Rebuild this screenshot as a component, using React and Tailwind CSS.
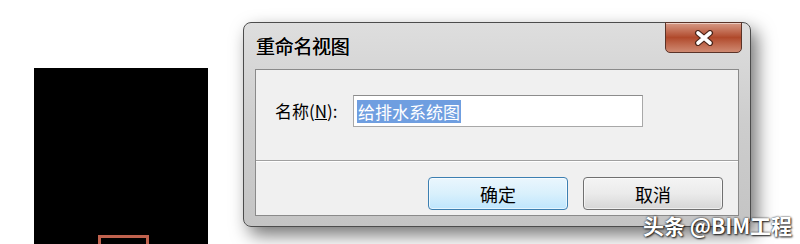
export default function App() {
  const cjk = { fontFamily: '"Noto Sans CJK SC", "Noto Sans", sans-serif' };
  return (
    <div className="relative w-[800px] h-[244px] overflow-hidden bg-white flex items-start" style={cjk}>
      {/* black canvas block */}
      <div className="ml-[34px] mt-[68px] w-[174px] h-[190px] bg-black shrink-0 flex flex-col pt-[167px] pl-[64px]">
        <div className="w-[51px] h-[20px] border-[3px] border-[#c0624e] bg-black" />
      </div>

      {/* dialog */}
      <div className="ml-[35px] mt-[22px] w-[508px] h-[205px] shrink-0 rounded-[8px] border border-[#4c4c4c] bg-gradient-to-b from-[#dedede] via-[#cdcdcd] to-[#c4c4c4] shadow-[6px_8px_18px_rgba(0,0,0,0.55)] flex flex-col px-[11px] pb-[10px]">
        {/* title bar */}
        <div className="h-[46px] flex items-start justify-between">
          <div className="pt-[10px] pl-[1px] text-[19px] leading-[26px] text-black tracking-[-0.3px] [text-shadow:0_0_0.4px_#000]">重命名视图</div>
          <div className="-mt-px -mr-[3px] w-[77px] h-[31px] rounded-b-[5px] border border-[#5a3328] bg-gradient-to-b from-[#d69a86] via-[#b0492b] to-[#cf8a72] flex items-center justify-center shadow-[inset_0_1px_0_rgba(255,255,255,0.5)]">
            <svg width="22" height="16" viewBox="0 0 22 16">
              <path d="M5 3 L17 13 M17 3 L5 13" stroke="#4a2418" strokeWidth="6" strokeLinecap="round" />
              <path d="M5 3 L17 13 M17 3 L5 13" stroke="#ffffff" strokeWidth="3.6" strokeLinecap="round" />
            </svg>
          </div>
        </div>

        {/* client area */}
        <div className="flex-1 border border-[#8a8a8a] bg-[#f0f0f0] flex flex-col">
          <div className="h-[91px] flex items-start pt-[25px] pl-[19px] border-b border-[#a0a0a0]">
            <div className="mt-[4px] text-[17px] leading-[24px] text-black w-[78px]">
              名称(<span className="underline">N</span>):
            </div>
            <div className="w-[290px] h-[32px] border border-[#a8a8a8] border-t-[#8c8c8c] bg-white flex items-center pl-[3px]">
              <span className="bg-[#6f9ee0] text-white text-[17px] leading-[23px] px-[1px]">给排水系统图</span>
            </div>
          </div>
          <div className="border-t border-white flex-1 flex justify-end items-start pt-[15px] pr-[15px] gap-[15px]">
            <button className="w-[140px] h-[33px] rounded-[4px] border border-[#3c7fb1] bg-gradient-to-b from-[#eaf6fd] via-[#d9f0fc] to-[#bee6fd] text-[18px] text-black leading-none shadow-[inset_0_0_0_1px_rgba(255,255,255,0.6)]">
              确定
            </button>
            <button className="w-[140px] h-[33px] rounded-[4px] border border-[#707070] bg-gradient-to-b from-[#f4f4f4] via-[#ebebeb] to-[#d6d6d6] text-[18px] text-black leading-none shadow-[inset_0_0_0_1px_rgba(255,255,255,0.6)]">
              取消
            </button>
          </div>
        </div>
      </div>

      {/* watermark */}
      <div className="absolute left-[643px] top-[211px] text-[21px] leading-[28px] font-bold text-white whitespace-nowrap [text-shadow:0_0_2px_rgba(0,0,0,0.9),1px_1px_2px_rgba(0,0,0,0.8)]">
        头条 @BIM工程
      </div>
    </div>
  );
}
